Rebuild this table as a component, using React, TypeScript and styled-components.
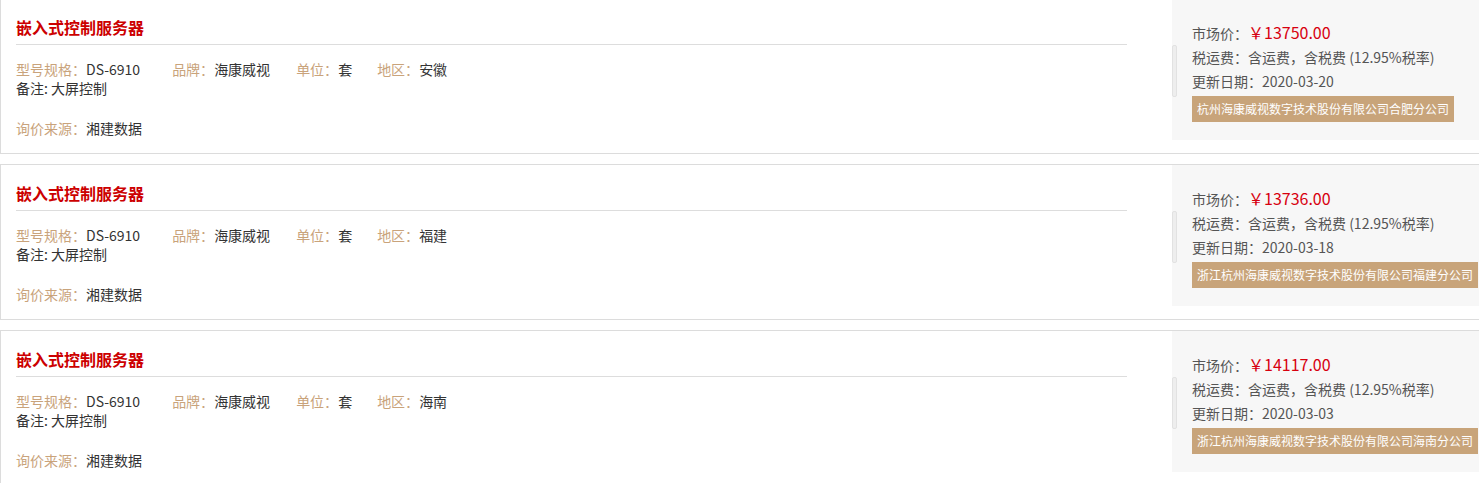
import React from "react";
import styled, { createGlobalStyle } from "styled-components";

interface Quote {
  id: number;
  title: string;
  model: string;
  brand: string;
  unit: string;
  region: string;
  remark: string;
  source: string;
  price: string;
  tax: string;
  date: string;
  company: string;
}

const quotes: Quote[] = [
  {
    id: 1,
    title: "嵌入式控制服务器",
    model: "DS-6910",
    brand: "海康威视",
    unit: "套",
    region: "安徽",
    remark: "大屏控制",
    source: "湘建数据",
    price: "￥13750.00",
    tax: "含运费，含税费 (12.95%税率)",
    date: "2020-03-20",
    company: "杭州海康威视数字技术股份有限公司合肥分公司",
  },
  {
    id: 2,
    title: "嵌入式控制服务器",
    model: "DS-6910",
    brand: "海康威视",
    unit: "套",
    region: "福建",
    remark: "大屏控制",
    source: "湘建数据",
    price: "￥13736.00",
    tax: "含运费，含税费 (12.95%税率)",
    date: "2020-03-18",
    company: "浙江杭州海康威视数字技术股份有限公司福建分公司",
  },
  {
    id: 3,
    title: "嵌入式控制服务器",
    model: "DS-6910",
    brand: "海康威视",
    unit: "套",
    region: "海南",
    remark: "大屏控制",
    source: "湘建数据",
    price: "￥14117.00",
    tax: "含运费，含税费 (12.95%税率)",
    date: "2020-03-03",
    company: "浙江杭州海康威视数字技术股份有限公司海南分公司",
  },
];

const App: React.FC = () => {
  return (
    <>
      <GlobalStyle />
      <List>
        {quotes.map((q) => (
          <Card key={q.id}>
            <Main>
              <Title>{q.title}</Title>
              <Fields>
                <Field $gap={32}>
                  <Label>型号规格：</Label>
                  <Value>{q.model}</Value>
                </Field>
                <Field $gap={26}>
                  <Label>品牌：</Label>
                  <Value>{q.brand}</Value>
                </Field>
                <Field $gap={25}>
                  <Label>单位：</Label>
                  <Value>{q.unit}</Value>
                </Field>
                <Field $gap={0}>
                  <Label>地区：</Label>
                  <Value>{q.region}</Value>
                </Field>
              </Fields>
              <Remark>备注: {q.remark}</Remark>
              <Source>
                <Label>询价来源：</Label>
                <Value>{q.source}</Value>
              </Source>
            </Main>
            <PricePanel>
              <ScrollThumb />
              <PanelLine>
                市场价：<Price>{q.price}</Price>
              </PanelLine>
              <PanelLine>税运费：{q.tax}</PanelLine>
              <PanelLine>更新日期：{q.date}</PanelLine>
              <Company>{q.company}</Company>
            </PricePanel>
          </Card>
        ))}
      </List>
    </>
  );
};

// 스타일
const GlobalStyle = createGlobalStyle`
  html, body {
    margin: 0;
    padding: 0;
    background: #fff;
    overflow: hidden;
  }
  body {
    font-family: "Microsoft YaHei", "Noto Sans CJK SC", "Noto Sans", sans-serif;
    font-size: 14px;
    color: #333;
  }
`;

const List = styled.div`
  margin-top: -2px;
  display: flex;
  flex-direction: column;
  gap: 10px;
`;

const Card = styled.div`
  width: 1482px;
  box-sizing: border-box;
  border: 1px solid #dcdcdc;
  background: #fff;
  display: flex;
  align-items: flex-start;
  height: 156px;
`;

const Main = styled.div`
  flex: 1;
  padding: 16px 45px 0 15px;
`;

const Title = styled.div`
  font-size: 16px;
  line-height: 24px;
  font-weight: bold;
  color: #cc0000;
  padding-bottom: 5px;
  border-bottom: 1px solid #dddddd;
`;

const Fields = styled.div`
  display: flex;
  margin-top: 15px;
  line-height: 19px;
`;

const Field = styled.span<{ $gap: number }>`
  margin-right: ${(p) => p.$gap}px;
`;

const Label = styled.span`
  color: #c9a37b;
`;

const Value = styled.span`
  color: #333;
`;

const Remark = styled.div`
  line-height: 19px;
  color: #333;
`;

const Source = styled.div`
  margin-top: 20px;
  line-height: 20px;
`;

const PricePanel = styled.div`
  position: relative;
  width: 309px;
  box-sizing: border-box;
  height: 141px;
  background: #f7f7f7;
  padding: 21px 0 19px 20px;
  color: #555;
`;

const ScrollThumb = styled.div`
  position: absolute;
  left: 0;
  top: 46px;
  width: 3px;
  height: 50px;
  border: 1px solid #e2e2e2;
  border-radius: 2px;
  background: #eeeeee;
`;

const PanelLine = styled.div`
  line-height: 24px;
  white-space: nowrap;
`;

const Price = styled.span`
  font-size: 16px;
  color: #d7000f;
`;

const Company = styled.div`
  display: inline-block;
  margin-top: 3px;
  height: 26px;
  line-height: 26px;
  padding: 0 5px;
  font-size: 12px;
  color: #fff;
  background: #c8a47a;
  white-space: nowrap;
`;

export default App;
